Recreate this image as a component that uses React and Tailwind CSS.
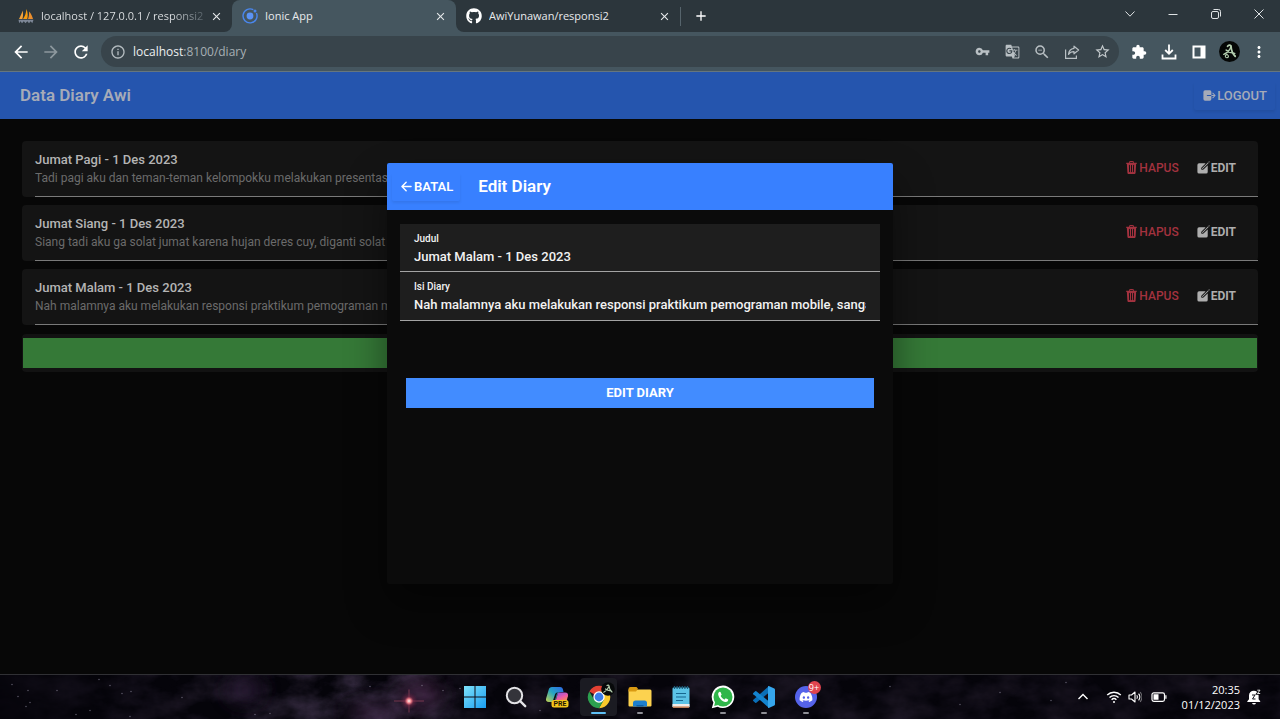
import React from "react";
import {
  MdArrowBack,
  MdArrowForward,
  MdClose,
  MdExtension,
  MdGTranslate,
  MdInfoOutline,
  MdMoreVert,
  MdRefresh,
  MdStarBorder,
  MdVpnKey,
  MdZoomOut,
  MdAdd,
} from "react-icons/md";
import { IoArrowBack, IoCreate, IoLogOut, IoTrash } from "react-icons/io5";
import { FaDiscord, FaGithub } from "react-icons/fa";

const entries = [
  {
    title: "Jumat Pagi - 1 Des 2023",
    text: "Tadi pagi aku dan teman-teman kelompokku melakukan presentasi",
  },
  {
    title: "Jumat Siang - 1 Des 2023",
    text: "Siang tadi aku ga solat jumat karena hujan deres cuy, diganti solat zhr",
  },
  {
    title: "Jumat Malam - 1 Des 2023",
    text: "Nah malamnya aku melakukan responsi praktikum pemograman mob",
  },
];

function PhpMyAdminIcon() {
  return (
    <svg viewBox="0 0 16 16" className="size-4 shrink-0" aria-hidden="true">
      <path d="M1 11C2.5 8 4 5 4.6 2.5c.7 3 .6 6-.2 8.5z" fill="#f5a33a" />
      <path d="M5 11c2-3 3.200-6 3.400-10 1.500 3.500 1.700 7 .8 10z" fill="#f89c0e" />
      <path d="M10 11c.9-2.400 1.200-4.600 1-7.500 2 2 3.400 4.600 4 7.500z" fill="#e98e2e" />
      <path d="M.5 11.800h15l-1.200 3.400-1.600-2-1.700 2-1.700-2-1.800 2-1.700-2L4 15.200l-1.500-2-1.300 2z" fill="#7d8797" />
    </svg>
  );
}

function IonicIcon() {
  return (
    <svg viewBox="0 0 16 16" className="size-4 shrink-0" aria-hidden="true">
      <path d="M11.300 1.700A7 7 0 1 0 14.400 5" fill="none" stroke="#4a87ee" strokeWidth="1.400" />
      <circle cx="8" cy="8" r="3.400" fill="#5b93f5" />
      <circle cx="13" cy="3" r="1.500" fill="#4a87ee" />
    </svg>
  );
}

function Tab({ icon, label, faded }) {
  return (
    <div className="flex h-full w-[224px] items-center gap-[7px] pr-[9px] pl-[10px]">
      {icon}
      <span
        className={
          faded
            ? "min-w-0 flex-1 overflow-hidden bg-linear-to-r from-[#e3e6e8] from-80% to-[#59646b] bg-clip-text whitespace-nowrap text-transparent"
            : "min-w-0 flex-1 overflow-hidden whitespace-nowrap text-[#e8eaec]"
        }
      >
        {label}
      </span>
      <button aria-label="Close tab" className="text-[#e6e9eb]">
        <MdClose className="size-[13px]" />
      </button>
    </div>
  );
}

function WindowButton({ label, children }) {
  return (
    <button aria-label={label} className="flex h-[27px] w-[43px] items-center justify-center text-[#dfe3e5]">
      <svg viewBox="0 0 12 12" className="size-3" fill="none" stroke="currentColor" strokeWidth="1">
        {children}
      </svg>
    </button>
  );
}

function ToolButton({ label, children, className = "text-white" }) {
  return (
    <button aria-label={label} className={`flex h-7 w-[30px] shrink-0 items-center justify-center ${className}`}>
      {children}
    </button>
  );
}

function Scribble({ className }) {
  return (
    <svg viewBox="0 0 22 22" className={className} aria-hidden="true">
      <circle cx="11" cy="11" r="11" fill="#050706" />
      <g fill="none" stroke="#b5cfb0" strokeLinecap="round">
        <path d="M9 5.500c1-1.300 2.500-1.500 3.500-.5.300 4.500 1.200 8 4.500 11" strokeWidth="1.900" />
        <path d="M12.500 6C11.500 9.500 9 12 5 14M7.500 9.500c2.500 2 5.500 3 9 3.500" strokeWidth="1.500" />
        <path d="M8.500 14c-2.500.5-2.500 3.300-.3 3.500 1.800 0 2.200-1.800 1-2.700" strokeWidth="1.200" />
      </g>
    </svg>
  );
}

function BrowserChrome() {
  return (
    <div className="shrink-0 bg-[#45565f] font-['Open_Sans',sans-serif]">
      <div className="flex h-8 text-[11px]">
        <div className="rounded-br-lg bg-[#2c363c] pl-2">
          <Tab icon={<PhpMyAdminIcon />} label="localhost / 127.0.0.1 / responsi2" faded />
        </div>
        <div className="bg-[#2c363c]">
          <div className="h-full rounded-t-lg bg-[#45565f]">
            <Tab icon={<IonicIcon />} label="Ionic App" />
          </div>
        </div>
        <div className="flex flex-1 items-center rounded-bl-lg bg-[#2c363c]">
          <Tab icon={<FaGithub className="size-4 shrink-0 text-white" />} label="AwiYunawan/responsi2" />
          <div className="h-[19px] w-px bg-[#56646c]" />
          <button aria-label="New tab" className="ml-3 text-white">
            <MdAdd className="size-4" />
          </button>
          <div className="ml-auto flex h-full items-start">
            <WindowButton label="Search tabs">
              <path d="M1.500 3.500 6 8.200l4.500-4.700" />
            </WindowButton>
            <WindowButton label="Minimize">
              <path d="M1.500 6.500h9" />
            </WindowButton>
            <WindowButton label="Restore">
              <rect x="1.500" y="3.500" width="7" height="7" rx="1.500" />
              <path d="M3.500 1.500h5a2 2 0 0 1 2 2v5" />
            </WindowButton>
            <WindowButton label="Close">
              <path d="m1.500 1.500 9 9m0-9-9 9" />
            </WindowButton>
          </div>
        </div>
      </div>
      <div className="flex h-10 items-center gap-[5px] border-b border-[#66767e] px-1.5">
        <div className="flex">
          <ToolButton label="Back">
            <MdArrowBack className="size-5" />
          </ToolButton>
          <ToolButton label="Forward" className="text-[#8d989e]">
            <MdArrowForward className="size-5" />
          </ToolButton>
          <ToolButton label="Reload">
            <MdRefresh className="size-5" />
          </ToolButton>
        </div>
        <div className="flex h-[31px] min-w-0 flex-1 items-center rounded-full bg-[#38444b] pr-0.5 pl-[9px] text-[12px]">
          <MdInfoOutline className="size-4 shrink-0 text-[#b4bcc0]" />
          <span className="ml-[7px] flex-1 text-[#a7b0b5]">
            <span className="text-[#eceff0]">localhost</span>:8100/diary
          </span>
          <ToolButton label="Passwords" className="text-[#b9c0c4]">
            <MdVpnKey className="size-[15px]" />
          </ToolButton>
          <ToolButton label="Translate" className="text-[#b9c0c4]">
            <MdGTranslate className="size-[15px]" />
          </ToolButton>
          <ToolButton label="Zoom" className="text-[#b9c0c4]">
            <MdZoomOut className="size-[18px]" />
          </ToolButton>
          <ToolButton label="Share" className="text-[#b9c0c4]">
            <svg viewBox="0 0 16 16" className="size-4" fill="none" stroke="currentColor" strokeWidth="1.200">
              <path d="M1.600 5.500v8.900h10.800v-3" />
              <path d="M10 2.200 14.600 6 10 9.800V7.700c-2.600 0-4.300.8-5.500 2.700.3-3.500 2-5.700 5.500-6.100z" strokeLinejoin="round" />
            </svg>
          </ToolButton>
          <ToolButton label="Bookmark" className="text-[#c3c9cc]">
            <MdStarBorder className="size-[17px]" />
          </ToolButton>
        </div>
        <div className="flex">
          <ToolButton label="Extensions">
            <MdExtension className="size-4" />
          </ToolButton>
          <ToolButton label="Downloads">
            <svg viewBox="0 0 16 16" className="size-4" fill="none" stroke="currentColor" strokeWidth="1.800">
              <path d="M8 .5v9M4.200 6 8 9.800 11.800 6M1.500 10.500v4h13v-4" />
            </svg>
          </ToolButton>
          <ToolButton label="Side panel">
            <svg viewBox="0 0 14 14" className="size-3.5" aria-hidden="true">
              <path d="M.5.500h13v13H.5zM2.500 2.500v9h6v-9z" fill="currentColor" fillRule="evenodd" />
            </svg>
          </ToolButton>
          <ToolButton label="Profile">
            <Scribble className="size-[21px]" />
          </ToolButton>
          <ToolButton label="Menu">
            <MdMoreVert className="size-[18px]" />
          </ToolButton>
        </div>
      </div>
    </div>
  );
}

function DiaryItem({ title, text }) {
  return (
    <li className="rounded-sm bg-[#141414] pl-[13px]">
      <div className="flex h-14 items-center border-b border-[#7a7a7a] pr-[18px] pb-0.5">
        <div className="min-w-0 flex-1">
          <h2 className="text-[13px] leading-5 font-medium text-[#b4b4b4]">{title}</h2>
          <p className="truncate text-[12px] leading-4 text-[#6b6b6b]">{text}</p>
        </div>
        <button className="flex items-center rounded-sm px-1 py-1.5 text-[12px] leading-4 font-medium text-[#a3323f]">
          <IoTrash className="size-[15px]" />
          HAPUS
        </button>
        <button className="ml-[9px] flex items-center rounded-sm px-1 py-1.5 text-[12px] leading-4 font-bold text-[#aeaeae]">
          <IoCreate className="size-[15px]" />
          EDIT
        </button>
      </div>
    </li>
  );
}

function EditModal() {
  return (
    <div className="absolute inset-0 flex items-center justify-center pt-px">
      <div
        role="dialog"
        aria-labelledby="modal-title"
        className="flex h-[70%] w-[506px] max-w-full flex-col overflow-hidden rounded-xs bg-[#0b0b0b] shadow-[0_20px_40px_rgba(0,0,0,0.45)]"
      >
        <header className="flex h-[47px] shrink-0 items-center bg-[#3880ff] px-[5px] text-white">
          <button className="flex h-7 items-center rounded-xs px-[7px] text-[13px] font-semibold shadow-[0_2px_3px_rgba(0,0,0,0.08)]">
            <IoArrowBack className="size-[15px]" />
            BATAL
          </button>
          <h2 id="modal-title" className="ml-[18px] text-[17px] font-semibold">
            Edit Diary
          </h2>
        </header>
        <form className="flex flex-col px-[13px] pt-3.5 text-[#f2f2f2]" onSubmit={(e) => e.preventDefault()}>
          <div className="flex h-12 flex-col border-b border-[#a4a4a4] bg-[#1e1e1e] px-3.5 pt-[7px]">
            <label htmlFor="judul" className="text-[10px] leading-4 font-medium">
              Judul
            </label>
            <input
              id="judul"
              defaultValue="Jumat Malam - 1 Des 2023"
              className="w-full bg-transparent text-[13px] leading-5 font-medium outline-none"
            />
          </div>
          <div className="flex h-[49px] flex-col border-b border-[#a4a4a4] bg-[#1e1e1e] px-3.5 pt-[7px]">
            <label htmlFor="isi" className="text-[10px] leading-4 font-medium">
              Isi Diary
            </label>
            <input
              id="isi"
              defaultValue="Nah malamnya aku melakukan responsi praktikum pemograman mobile, sangat seru"
              className="w-full bg-transparent text-[13px] leading-5 font-medium outline-none"
            />
          </div>
          <button className="mx-1.5 mt-[57px] h-[30px] bg-[#428cff] text-[13px] font-bold text-white">EDIT DIARY</button>
        </form>
      </div>
    </div>
  );
}

function TaskButton({ label, children, active, running }) {
  return (
    <button
      aria-label={label}
      className={
        active
          ? "flex h-[38px] w-[37px] flex-col items-center rounded-sm bg-[#1b1b22] pt-1.5"
          : "flex h-[38px] w-[37px] flex-col items-center pt-1.5"
      }
    >
      <span className="flex h-[26px] items-center justify-center">{children}</span>
      {active && <span className="mt-0.5 h-0.5 w-[15px] rounded-full bg-[#5fc0f5]" />}
      {running && <span className="mt-0.5 h-0.5 w-1.5 rounded-full bg-[#8f8f96]" />}
    </button>
  );
}

const stars = [
  [12, 10], [28, 16], [18, 22], [30, 28], [26, 32], [57, 16], [99, 5], [110, 11], [122, 19], [131, 17],
  [90, 36], [76, 40], [130, 42], [182, 23], [255, 40], [270, 39], [370, 12], [422, 11], [443, 16], [1051, 26],
  [1066, 8], [460, 14], [540, 36], [890, 12], [960, 30], [1000, 18],
];

function NightSky() {
  return (
    <svg
      viewBox="0 0 1280 45"
      preserveAspectRatio="xMidYMid slice"
      className="absolute inset-0 size-full"
      aria-hidden="true"
    >
      <defs>
        <filter id="cloud" x="0" y="0" width="100%" height="100%">
          <feTurbulence type="fractalNoise" baseFrequency="0.025 0.04" numOctaves="5" seed="8" />
          <feColorMatrix values="0 0 0 0 0.17  0 0 0 0 0.11  0 0 0 0 0.24  1.600 0 0 0 -0.5" />
        </filter>
        <filter id="soft" x="-30%" y="-60%" width="160%" height="220%">
          <feGaussianBlur stdDeviation="9" />
        </filter>
        <linearGradient id="fade">
          <stop offset="0" stopColor="#fff" stopOpacity="0.05" />
          <stop offset="0.18" stopColor="#fff" stopOpacity="0.35" />
          <stop offset="0.32" stopColor="#fff" stopOpacity="0.65" />
          <stop offset="0.37" stopColor="#fff" stopOpacity="0.25" />
          <stop offset="1" stopColor="#fff" stopOpacity="0.2" />
        </linearGradient>
        <mask id="fadeMask">
          <rect width="1280" height="45" fill="url(#fade)" />
        </mask>
        <radialGradient id="glow">
          <stop offset="0" stopColor="#fff2ee" />
          <stop offset="0.25" stopColor="#ee7d86" />
          <stop offset="0.5" stopColor="#8b3050" stopOpacity="0.5" />
          <stop offset="1" stopColor="#5a2347" stopOpacity="0" />
        </radialGradient>
      </defs>
      <rect width="1280" height="45" fill="#05040a" />
      <g mask="url(#fadeMask)">
        <rect width="1280" height="45" filter="url(#cloud)" />
      </g>
      <g filter="url(#soft)" opacity="0.6">
        <ellipse cx="245" cy="15" rx="18" ry="14" fill="#3b2848" />
        <ellipse cx="375" cy="38" rx="30" ry="10" fill="#4f3056" />
        <ellipse cx="420" cy="20" rx="22" ry="16" fill="#4a2748" />
      </g>
      {stars.map(([x, y]) => (
        <circle key={`${x}-${y}`} cx={x} cy={y} r="0.700" fill="#8e8a9c" opacity="0.7" />
      ))}
      <path d="M394 26.500h30M409 15v23" stroke="#b04c64" strokeWidth="0.800" opacity="0.7" />
      <circle cx="409" cy="26.500" r="9" fill="url(#glow)" />
    </svg>
  );
}

function Taskbar() {
  return (
    <footer className="relative h-[45px] shrink-0 border-t border-[#303034] bg-[#05040a] font-['Open_Sans',sans-serif] text-white">
      <NightSky />
      <div className="relative grid h-full grid-cols-[1fr_auto_1fr] items-center">
        <div />
        <nav className="flex w-[368px] justify-between">
          <TaskButton label="Start">
            <svg viewBox="0 0 22 22" className="size-[22px]">
              <defs>
                <linearGradient id="win" x1="0" y1="0" x2="1" y2="1">
                  <stop offset="0" stopColor="#7fe3fb" />
                  <stop offset="1" stopColor="#199df0" />
                </linearGradient>
              </defs>
              <path d="M0 0h10.500v10.500H0zM11.500 0H22v10.500H11.500zM0 11.500h10.500V22H0zM11.500 11.500H22V22H11.500z" fill="url(#win)" />
            </svg>
          </TaskButton>
          <TaskButton label="Search">
            <svg viewBox="0 0 22 22" className="size-[22px]" fill="none" stroke="#e3e3e6">
              <circle cx="9.500" cy="9.500" r="7.700" fill="#34343a" strokeWidth="2" />
              <path d="m15.200 15.200 5 5" strokeWidth="2.400" strokeLinecap="round" />
            </svg>
          </TaskButton>
          <TaskButton label="Copilot">
            <svg viewBox="0 0 24 24" className="size-6">
              <defs>
                <linearGradient id="copA" x1="1" y1="0" x2="0" y2="1">
                  <stop offset="0" stopColor="#2d66e8" />
                  <stop offset="0.5" stopColor="#27a5c2" />
                  <stop offset="1" stopColor="#c7d34a" />
                </linearGradient>
                <linearGradient id="copB" x1="0" y1="0" x2="0.600" y2="1">
                  <stop offset="0" stopColor="#7c56e8" />
                  <stop offset="0.6" stopColor="#ec5aa8" />
                  <stop offset="1" stopColor="#f58a52" />
                </linearGradient>
              </defs>
              <path d="M7 2h8c2 0 2.600 1 3 2.500L18.500 7H16c-2 0-3 .8-3.600 2.600L11 14l-1 3H4c-2.400 0-3.500-1.300-2.900-3.500l2.600-8.700C4.200 3 5.300 2 7 2z" fill="url(#copA)" />
              <path d="M14 7.500h6c2.400 0 3.500 1.500 2.900 3.700l-1.500 5.300H10.500l2-7c.3-1 .7-2 1.500-2z" fill="url(#copB)" />
              <path d="M7.500 17 10 9.500c.6-1.500 1.500-2 3-2-.8.500-1 1-1.300 2L9.500 17z" fill="#101018" />
              <rect x="6.500" y="15" width="17" height="7.500" rx="2.500" fill="#f5c51b" />
              <text x="15" y="21.300" textAnchor="middle" className="font-['Roboto',sans-serif] text-[7px] font-bold" fill="#1d1804">
                PRE
              </text>
            </svg>
          </TaskButton>
          <TaskButton label="Google Chrome" active>
            <svg viewBox="0 0 28 28" className="size-7 overflow-visible">
              <path d="M14 14 4.300 8.400A11.200 11.200 0 0 1 23.700 8.400H14z" fill="#e34133" />
              <path d="M14 14V8.400h9.700A11.200 11.200 0 0 1 14 25.200l4.800-8.400z" fill="#f9c92b" />
              <path d="M14 14l4.800 2.800L14 25.200A11.200 11.200 0 0 1 4.300 8.400l4.900 8.400z" fill="#2ca04f" />
              <circle cx="14" cy="14" r="5.700" fill="#fff" />
              <circle cx="14" cy="14" r="4.400" fill="#3b7de9" />
              <circle cx="23" cy="6" r="6.800" fill="#07090a" />
              <path d="M22 2.500c1-.8 1.800-.5 2 .3.200 2.700 1 4.700 3 6.200M24 3.500C23 6 21.500 8 18.800 9.200M20.500 6c1.500 1.200 3.500 1.700 5.500 2" fill="none" stroke="#b5cfb0" strokeWidth="1.200" strokeLinecap="round" />
            </svg>
          </TaskButton>
          <TaskButton label="File Explorer" running>
            <svg viewBox="0 0 24 22" className="h-[22px] w-6">
              <path d="M.5 6V3.500h21.700q1.300 0 1.300 1.500v14.500q0 1-1.200 1H1.700q-1.200 0-1.200-1z" fill="#fcd24f" />
              <path d="M.5 3q0-2 2-2h6l1.500 1.800-2 2.700H.5z" fill="#d99a12" />
              <path d="M5 20.500V17q0-2.500 2.500-2.500h9Q19 14.500 19 17v3.500z" fill="#1d7fcd" />
              <path d="M8.500 20.500V19h7v1.500z" fill="#0d5ea6" />
            </svg>
          </TaskButton>
          <TaskButton label="Notepad">
            <svg viewBox="0 0 20 24" className="h-6 w-5">
              <rect x="1.500" y="2.500" width="17" height="20" rx="1.200" fill="#5cc3e6" />
              <path d="M1.500 19h17v2.300q0 1.200-1.200 1.200H2.700q-1.200 0-1.200-1.200z" fill="#f1ece8" />
              <path d="M1.500 21.500h17l-.6 1.200H2.200z" fill="#c8703c" />
              <path d="M5 8.500h10M5 12h10M5 15.500h7" stroke="#17678f" strokeWidth="1.200" />
              <path d="M3.500 1v3M6.100 1v3M8.700 1v3M11.300 1v3M13.900 1v3M16.500 1v3" stroke="#1b5c7b" strokeWidth="1.200" />
            </svg>
          </TaskButton>
          <TaskButton label="WhatsApp" running>
            <svg viewBox="0 0 24 24" className="size-6">
              <path d="M12 .500a11.300 11.300 0 1 1-5.300 21.300L.8 23.300l1.600-5.700A11.300 11.300 0 0 1 12 .500z" fill="#fff" />
              <circle cx="12" cy="12" r="9.500" fill="#2fb64a" />
              <path d="M3.200 20.900 4.300 16l3.900 3.800z" fill="#2fb64a" />
              <path d="M8.700 6.700c-.9.300-1.700 1.300-1.500 2.700.6 3.700 4 7 7.300 7.500 1.500.2 2.500-.6 2.700-1.900v-.5l-2.500-1.300c-.8.800-1 1.400-1.500 1.200-1.600-.7-2.800-2-3.500-3.300.1-.5.800-.8.900-1.500L9.500 6.900z" fill="#fff" />
            </svg>
          </TaskButton>
          <TaskButton label="Visual Studio Code" running>
            <svg viewBox="0 0 24 24" className="size-6">
              <path d="M17 1v6.500L4.300 17.800q-.6.400-1.100 0L1.300 16q-.6-.6 0-1.200z" fill="#0a6fb8" />
              <path d="M17 23v-6.500L4.300 6.200q-.6-.4-1.100 0L1.300 8q-.6.600 0 1.200z" fill="#1484cf" />
              <path d="M16.800 1 22.300 3.600q.7.400.7 1.200v14.400q0 .8-.7 1.200L16.800 23q-.8.200-.8-1V2q0-1.200.8-1z" fill="#36a6ec" />
            </svg>
          </TaskButton>
          <TaskButton label="Discord" running>
            <span className="relative flex size-[22px] items-center justify-center rounded-full bg-[#5563ea]">
              <FaDiscord className="size-3.5" />
              <span className="absolute -top-[5px] -right-1 flex size-[13px] items-center justify-center rounded-full bg-[#e0444f] text-[9px] leading-none">
                9+
              </span>
            </span>
          </TaskButton>
        </nav>
        <div className="flex items-center justify-end pr-[19px]">
          <button aria-label="Hidden icons" className="mr-[17px]">
            <svg viewBox="0 0 12 12" className="size-3" fill="none" stroke="currentColor" strokeWidth="1.400">
              <path d="m1.500 8 4.500-4.500L10.500 8" />
            </svg>
          </button>
          <svg viewBox="0 0 16 14" className="mr-1.5 h-3.5 w-4" fill="none" stroke="currentColor" strokeWidth="1.400" aria-label="Wi-Fi">
            <path d="M1.200 5a9.600 9.600 0 0 1 13.600 0M3.500 7.500a6.400 6.400 0 0 1 9 0M5.600 9.800a3.400 3.400 0 0 1 4.800 0" />
            <circle cx="8" cy="12" r="1" fill="currentColor" stroke="none" />
          </svg>
          <svg viewBox="0 0 14 14" className="mr-[9px] size-3.5" fill="none" stroke="currentColor" strokeWidth="1.100" aria-label="Volume">
            <path d="M1 5v4h2.500L7 12V2L3.500 5z" strokeLinejoin="round" />
            <path d="M8.800 5.200q1.300 1.800 0 3.600M10.600 3.600q2.500 3.400 0 6.800" />
            <path d="M12.200 2q3.500 5 0 10" opacity="0.4" />
          </svg>
          <svg viewBox="0 0 16 12" className="h-3 w-4" aria-label="Battery">
            <rect x="1" y="1.800" width="12.500" height="8.500" rx="1.800" fill="none" stroke="currentColor" strokeWidth="1.200" />
            <path d="M2.500 3.300h5v5.500h-5zM14.300 4.300h1.200v3.500h-1.200z" fill="currentColor" />
          </svg>
          <div className="ml-[15px] flex flex-col items-end text-[11px] leading-[15px]">
            <time>20:35</time>
            <time>01/12/2023</time>
          </div>
          <svg viewBox="0 0 14 16" className="ml-[7px] h-4 w-3.5" aria-label="Notifications">
            <path d="M2 6.500a4.800 4.800 0 0 1 9.600 0v3.700l1.600 2v.8H.3v-.8l1.700-2z" fill="#fff" />
            <path d="M5 14h4q-.6 1.500-2 1.500T5 14z" fill="#fff" />
            <path d="M5 6h3L5.500 10h3" fill="none" stroke="#15151c" strokeWidth="1" />
            <path d="M10.300 1.200h2.700l-2.500 3.300h2.700" fill="none" stroke="#08070d" strokeWidth="2.400" />
            <path d="M10.300 1.200h2.700l-2.500 3.300h2.700" fill="none" stroke="#fff" strokeWidth="0.900" />
          </svg>
        </div>
      </div>
    </footer>
  );
}

export default function App() {
  return (
    <div className="flex h-screen flex-col overflow-hidden bg-[#070707] font-['Roboto',sans-serif]">
      <BrowserChrome />
      <div className="relative flex min-h-0 flex-1 flex-col">
        <header className="flex h-[47px] shrink-0 items-center justify-between bg-[#2555ae] pr-[5px] pl-5">
          <h1 className="text-[17px] font-semibold text-[#a6abb8]">Data Diary Awi</h1>
          <button className="flex h-7 items-center rounded-xs px-2 text-[13px] font-medium text-[#a6abb8] shadow-[0_2px_3px_rgba(0,0,0,0.08)]">
            <IoLogOut className="size-[15px]" />
            LOGOUT
          </button>
        </header>
        <main className="px-[22px] pt-[22px]">
          <ul className="flex flex-col gap-2">
            {entries.map((entry) => (
              <DiaryItem key={entry.title} title={entry.title} text={entry.text} />
            ))}
          </ul>
          <div className="mt-[9px] rounded-sm bg-[#121212] px-px py-1">
            <button aria-label="Tambah diary" className="block h-[30px] w-full bg-[#357937]" />
          </div>
        </main>
        <EditModal />
      </div>
      <Taskbar />
    </div>
  );
}
